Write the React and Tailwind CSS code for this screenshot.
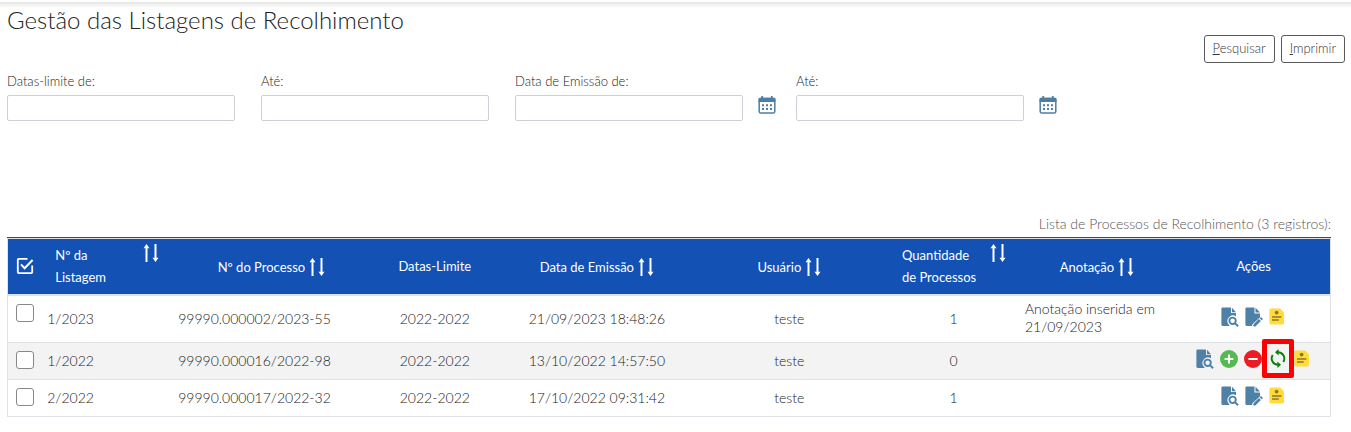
import React, { useState } from "react";

const FIELDS = [
  { label: "Datas-limite de:", id: "limite-de", calendar: false },
  { label: "Até:", id: "limite-ate", calendar: false },
  { label: "Data de Emissão de:", id: "emissao-de", calendar: true },
  { label: "Até:", id: "emissao-ate", calendar: true },
];

const ROWS = [
  {
    listagem: "1/2023",
    processo: "99990.000002/2023-55",
    limite: "2022-2022",
    emissao: "21/09/2023 18:48:26",
    usuario: "teste",
    quantidade: "1",
    anotacao: "Anotação inserida em 21/09/2023",
    aberta: false,
  },
  {
    listagem: "1/2022",
    processo: "99990.000016/2022-98",
    limite: "2022-2022",
    emissao: "13/10/2022 14:57:50",
    usuario: "teste",
    quantidade: "0",
    anotacao: "",
    aberta: true,
  },
  {
    listagem: "2/2022",
    processo: "99990.000017/2022-32",
    limite: "2022-2022",
    emissao: "17/10/2022 09:31:42",
    usuario: "teste",
    quantidade: "1",
    anotacao: "",
    aberta: false,
  },
];

function CalendarIcon() {
  return (
    <svg width="18" height="18" viewBox="0 0 18 18" aria-hidden="true">
      <rect x="1.2" y="2.4" width="15.6" height="14.6" rx="1.6" fill="#fff" stroke="#4d7fa6" strokeWidth="1.5" />
      <path d="M.5 3.2A1.4 1.4 0 0 1 2 1.8h14a1.4 1.4 0 0 1 1.5 1.4V6H.5z" fill="#4d7fa6" />
      <path d="M4.2 0v3M13.8 0v3" stroke="#4d7fa6" strokeWidth="1.8" />
      <path
        d="M4 8.2h2v2H4zM8 8.2h2v2H8zM12 8.2h2v2h-2zM4 12h2v2H4zM8 12h2v2H8zM12 12h2v2h-2z"
        fill="#4d7fa6"
      />
    </svg>
  );
}

function SortIcon() {
  return (
    <svg width="16" height="18" viewBox="0 0 16 18" className="shrink-0" aria-hidden="true">
      <path d="M3.500 18V3M12.500 0v15" stroke="#fff" strokeWidth="2" fill="none" />
      <path d="M3.500 0 6.500 4.200h-6zM12.500 18l3-4.200h-6z" fill="#fff" />
    </svg>
  );
}

function CheckAllIcon() {
  return (
    <svg width="18" height="18" viewBox="0 0 18 18" fill="none" stroke="#fff" strokeWidth="1.8" aria-hidden="true">
      <path d="M11.5 1.9H2.6a.8.8 0 0 0-.8.8v12.600c0 .5.400.900.900.900h12.600c.500 0 .900-.400.900-.900V8.600" />
      <path d="M5 7.400l3.600 3.800L16.600 3" strokeWidth="2" />
    </svg>
  );
}

function ViewIcon() {
  return (
    <svg width="18" height="20" viewBox="0 0 18 20" aria-hidden="true">
      <path
        d="M1.6.5H10v5.6h5v3.2a5.6 5.6 0 0 0-7 8.6c.4.5.8.8 1.2 1.1H1.6A1.3 1.3 0 0 1 .4 17.8V1.8A1.3 1.3 0 0 1 1.6.5z"
        fill="#4f80a5"
      />
      <path d="M11 .8 15 5.2h-4z" fill="#4f80a5" />
      <circle cx="11.6" cy="13.8" r="3.2" fill="none" stroke="#4f80a5" strokeWidth="1.9" />
      <path d="M13.9 16.1l3.2 3.2" stroke="#4f80a5" strokeWidth="2" />
    </svg>
  );
}

function EditIcon() {
  return (
    <svg width="18" height="20" viewBox="0 0 18 20" aria-hidden="true">
      <path
        d="M1.6.5H9.500v6h5.500v3.700L7.200 17.600V19H1.600A1.300 1.300 0 0 1 .4 17.800V1.800A1.300 1.300 0 0 1 1.600.5z"
        fill="#4f80a5"
      />
      <path d="M10.5.8 15 5.500h-4.500z" fill="#4f80a5" />
      <path d="M8.400 19.500v-2l5.500-5.500 2 2-5.500 5.500zM14.600 11.300l.9-.9c.3-.3.7-.3 1 0l1 1c.3.3.3.7 0 1l-.9.9z" fill="#4f80a5" />
    </svg>
  );
}

function NoteIcon() {
  return (
    <svg width="16" height="17" viewBox="0 0 16 17" aria-hidden="true">
      <path d="M2 .4h9L15 4.500V14.800a1.600 1.600 0 0 1-1.600 1.600H2A1.600 1.600 0 0 1 .4 14.800V2A1.600 1.600 0 0 1 2 .4z" fill="#ffdb3c" />
      <circle cx="7.600" cy="4.600" r="1.900" fill="#8d7822" />
      <path d="M3 9h9.400M3 12h6.800" stroke="#8d7822" strokeWidth="1.500" />
    </svg>
  );
}

function PlusIcon() {
  return (
    <svg width="18" height="18" viewBox="0 0 18 18" aria-hidden="true">
      <circle cx="9" cy="9" r="9" fill="#54b951" />
      <path d="M4.600 9h8.800M9 4.600v8.800" stroke="#fff" strokeWidth="2" />
    </svg>
  );
}

function MinusIcon() {
  return (
    <svg width="18" height="18" viewBox="0 0 18 18" aria-hidden="true">
      <circle cx="9" cy="9" r="9" fill="#ec1c24" />
      <path d="M4.400 9h9.200" stroke="#fff" strokeWidth="2" />
    </svg>
  );
}

function SyncIcon() {
  return (
    <svg width="16" height="19" viewBox="0 0 16 19" aria-hidden="true">
      <g fill="none" stroke="#098209" strokeWidth="1.900">
        <path d="M8 3.200a6.300 6.300 0 0 1 5.300 9.700" />
        <path d="M8 15.800A6.300 6.300 0 0 1 2.700 6.100" />
      </g>
      <path d="M8.600 0v6.400L5 3.200zM7.400 19v-6.400l3.600 3.200z" fill="#098209" />
    </svg>
  );
}

function Action({ label, children }) {
  return (
    <button type="button" aria-label={label} className="block cursor-pointer">
      {children}
    </button>
  );
}

function SortableHeader({ children }) {
  return (
    <button type="button" className="inline-flex cursor-pointer items-center gap-1 align-middle">
      {children}
      <SortIcon />
    </button>
  );
}

function WrappedHeader({ first, second, className }) {
  return (
    <button type="button" className={"flex cursor-pointer items-start justify-between text-left " + className}>
      <span>
        {first}
        <br />
        {second}
      </span>
      <SortIcon />
    </button>
  );
}

function ActionCell({ row }) {
  if (row.aberta) {
    return (
      <div className="flex items-center justify-center gap-1.5">
        <Action label="Visualizar listagem"><ViewIcon /></Action>
        <Action label="Adicionar processos"><PlusIcon /></Action>
        <Action label="Remover processos"><MinusIcon /></Action>
        <span className="relative px-0.5">
          <Action label="Atualizar listagem"><SyncIcon /></Action>
          <span className="pointer-events-none absolute -inset-x-1.5 -inset-y-2.5 rounded-xs border-5 border-[#fe0000]" />
        </span>
        <Action label="Anotação"><NoteIcon /></Action>
      </div>
    );
  }
  return (
    <div className="flex items-center justify-center gap-1.5">
      <Action label="Visualizar listagem"><ViewIcon /></Action>
      <Action label="Editar listagem"><EditIcon /></Action>
      <Action label="Anotação"><NoteIcon /></Action>
    </div>
  );
}

export default function App() {
  const [selected, setSelected] = useState([]);
  const toggle = (name) =>
    setSelected((s) => (s.includes(name) ? s.filter((n) => n !== name) : [...s, name]));

  return (
    <main className="bg-white pt-0.5 font-['Lato',sans-serif] text-[13px] font-light text-[#222]">
      <div className="h-1.5 bg-linear-to-b from-[#e4e4e4] to-white" />
      <div className="pr-1.5 pl-[7px]">
        <h1 className="text-[24px] leading-6 text-[#222]">Gestão das Listagens de Recolhimento</h1>

        <div className="mt-[3px] flex justify-end gap-1.5">
          <button type="button" className="h-7 cursor-pointer rounded-[3px] border border-[#58595b] px-2 text-[13px] text-[#333]">
            <u>P</u>esquisar
          </button>
          <button type="button" className="h-7 cursor-pointer rounded-[3px] border border-[#58595b] px-2 text-[13px] text-[#333]">
            <u>I</u>mprimir
          </button>
        </div>

        <form className="mt-1.5 flex flex-wrap">
          {FIELDS.map((c) => (
            <div key={c.id} className={c.calendar ? "mr-5" : "mr-[26px]"}>
              <label htmlFor={c.id} className="mb-0.5 block leading-6">{c.label}</label>
              <div className="flex items-center gap-[15px]">
                <input id={c.id} type="text" className="h-[26px] w-57 rounded-xs border border-[#ced0d9] px-2" />
                {c.calendar && (
                  <button type="button" aria-label={"Calendário, " + c.label} className="cursor-pointer pb-1.5">
                    <CalendarIcon />
                  </button>
                )}
              </div>
            </div>
          ))}
        </form>

        <div className="mt-[93px] mr-3.5">
          <table className="w-full table-fixed border-collapse text-center">
            <caption className="h-6 border-b border-[#3f5a0c] pb-1 text-right text-[14px] leading-5 text-[#555]">
              Lista de Processos de Recolhimento (3 registros):
            </caption>
            <colgroup>
              <col className="w-[2.4%]" />
              <col className="w-[9.9%]" />
              <col className="w-[15.3%]" />
              <col className="w-[9.4%]" />
              <col className="w-[15.1%]" />
              <col className="w-[14%]" />
              <col className="w-[10.2%]" />
              <col className="w-[12.1%]" />
              <col className="w-[11.6%]" />
            </colgroup>
            <thead>
              <tr className="h-14 border border-b-2 border-[#dee2e6] bg-[#1351b4] leading-[22px] text-white">
                <th className="pl-1 font-normal">
                  <button type="button" aria-label="Selecionar todos" className="block cursor-pointer" onClick={() => setSelected(ROWS.map((r) => r.listagem))}>
                    <span className="block pl-1"><CheckAllIcon /></span>
                  </button>
                </th>
                <th className="font-normal">
                  <WrappedHeader first="Nº da" second="Listagem" className="ml-4 w-26" />
                </th>
                <th className="font-normal"><SortableHeader>Nº do Processo</SortableHeader></th>
                <th className="font-normal">Datas-Limite</th>
                <th className="font-normal"><SortableHeader>Data de Emissão</SortableHeader></th>
                <th className="font-normal"><SortableHeader>Usuário</SortableHeader></th>
                <th className="font-normal">
                  <WrappedHeader first="Quantidade" second="de Processos" className="ml-5 w-26" />
                </th>
                <th className="font-normal"><SortableHeader>Anotação</SortableHeader></th>
                <th className="font-normal">Ações</th>
              </tr>
            </thead>
            <tbody className="text-[14px] leading-[18px]">
              {ROWS.map((r) => (
                <tr key={r.listagem} className="h-[37px] border border-[#dee2e6] even:bg-[#f3f3f3]">
                  <td className="pt-2 pl-2 align-top">
                    <input
                      type="checkbox"
                      aria-label={"Selecionar listagem " + r.listagem}
                      checked={selected.includes(r.listagem)}
                      onChange={() => toggle(r.listagem)}
                      className="block size-[18px] appearance-none rounded-[3px] border border-[#888] bg-white checked:bg-[#1351b4]"
                    />
                  </td>
                  <td className="pl-2 text-left">{r.listagem}</td>
                  <td className="pl-2 text-left">{r.processo}</td>
                  <td>{r.limite}</td>
                  <td>{r.emissao}</td>
                  <td>{r.usuario}</td>
                  <td className="pl-2">{r.quantidade}</td>
                  <td className={r.anotacao ? "pt-1 pb-1.5 pl-2 text-left" : ""}>{r.anotacao}</td>
                  <td className="pb-1"><ActionCell row={r} /></td>
                </tr>
              ))}
            </tbody>
          </table>
        </div>
      </div>
    </main>
  );
}
